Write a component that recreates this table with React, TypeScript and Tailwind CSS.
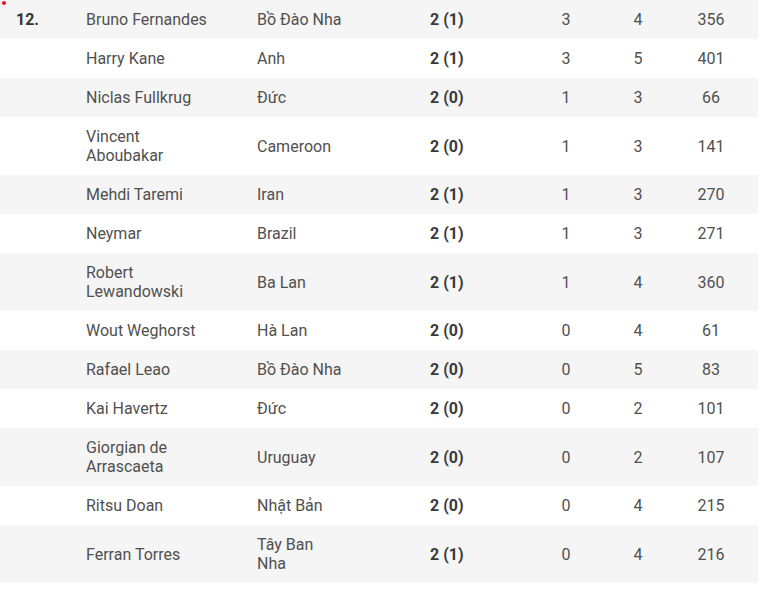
type Row = {
  rank?: string;
  name: string;
  country: string;
  goals: string;
  pens: string;
  assists: string;
  mins: string;
};

const rows: Row[] = [
  { rank: "12.", name: "Bruno Fernandes", country: "Bồ Đào Nha", goals: "2", pens: "1", assists: "3", mins: "4", },
  { name: "Harry Kane", country: "Anh", goals: "2", pens: "1", assists: "3", mins: "5" },
  { name: "Niclas Fullkrug", country: "Đức", goals: "2", pens: "0", assists: "1", mins: "3" },
  { name: "Vincent Aboubakar", country: "Cameroon", goals: "2", pens: "0", assists: "1", mins: "3" },
  { name: "Mehdi Taremi", country: "Iran", goals: "2", pens: "1", assists: "1", mins: "3" },
  { name: "Neymar", country: "Brazil", goals: "2", pens: "1", assists: "1", mins: "3" },
  { name: "Robert Lewandowski", country: "Ba Lan", goals: "2", pens: "1", assists: "1", mins: "4" },
  { name: "Wout Weghorst", country: "Hà Lan", goals: "2", pens: "0", assists: "0", mins: "4" },
  { name: "Rafael Leao", country: "Bồ Đào Nha", goals: "2", pens: "0", assists: "0", mins: "5" },
  { name: "Kai Havertz", country: "Đức", goals: "2", pens: "0", assists: "0", mins: "2" },
  { name: "Giorgian de Arrascaeta", country: "Uruguay", goals: "2", pens: "0", assists: "0", mins: "2" },
  { name: "Ritsu Doan", country: "Nhật Bản", goals: "2", pens: "0", assists: "0", mins: "4" },
  { name: "Ferran Torres", country: "Tây Ban Nha", goals: "2", pens: "1", assists: "0", mins: "4" },
];

// last column: minutes played
const minutes = ["356", "401", "66", "141", "270", "271", "360", "61", "83", "101", "107", "215", "216"];

export default function App() {
  return (
    <div className="relative w-[778px] min-h-[591px] bg-white font-['Roboto','Liberation_Sans',sans-serif] text-[16px] leading-[19px] text-[#505050]">
      <span className="absolute left-[2px] top-[1px] h-[4px] w-[4px] rounded-full bg-[#e8141c]" />
      <div className="w-[758px]">
        {rows.map((r, i) => (
          <div
            key={r.name}
            className={
              "grid grid-cols-[70px_171px_173px_116px_72px_72px_1fr] items-center pt-[10px] pb-[10px] " +
              (i % 2 === 0 ? "bg-[#f5f5f5]" : "bg-white")
            }
          >
            <div className="pl-4 font-bold text-[#333]">{r.rank}</div>
            <div className="pl-4 pr-[29px]">{r.name}</div>
            <div className="pl-4 pr-[71px]">{r.country}</div>
            <div className="pl-4 font-bold text-[#3a3a3a]">
              {r.goals} ({r.pens})
            </div>
            <div className="text-center">{r.assists}</div>
            <div className="text-center">{r.mins}</div>
            <div className="pr-[10px] text-center">{minutes[i]}</div>
          </div>
        ))}
      </div>
    </div>
  );
}
